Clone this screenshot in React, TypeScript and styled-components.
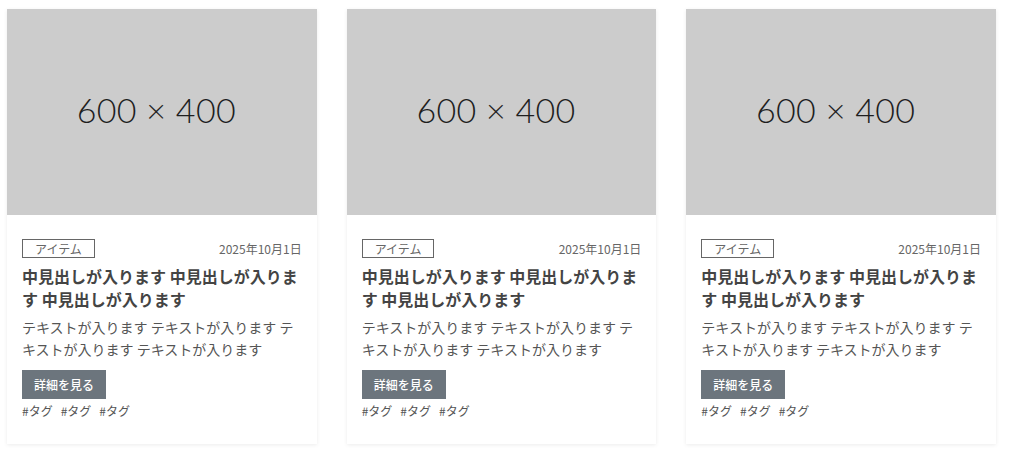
import styled, { createGlobalStyle } from "styled-components";

const GlobalStyle = createGlobalStyle`
  body {
    margin: 0;
    background: #fff;
    font-family: "Noto Sans CJK JP", "Noto Sans", sans-serif;
  }
`;

// Grid holding the three cards
const CardGrid = styled.div`
  display: grid;
  grid-template-columns: repeat(3, 1fr);
  gap: 30px;
  padding: 9px 13px 9px 7px;
`;

const Card = styled.article`
  background: #fff;
  box-shadow: 0 1px 4px rgba(0, 0, 0, 0.08);
  display: flex;
  flex-direction: column;
`;

// Grey placeholder image
const Thumb = styled.div`
  box-sizing: border-box;
  aspect-ratio: 3 / 2;
  background: #cccccc;
  display: flex;
  align-items: center;
  justify-content: center;
  padding: 0 11px 5px 0;
  color: #1e1e1e;
  font-family: "Lato", "Open Sans", sans-serif;
  font-weight: 300;
  font-size: 34px;
  letter-spacing: 0.3px;
`;

const Body = styled.div`
  padding: 24px 15px 24px;
  display: flex;
  flex-direction: column;
`;

const MetaRow = styled.div`
  display: flex;
  justify-content: space-between;
  align-items: center;
`;

const Category = styled.span`
  border: 1px solid #666;
  color: #666;
  font-size: 12px;
  line-height: 17px;
  padding: 0 12px;
`;

const Date = styled.time`
  color: #666;
  font-size: 12px;
`;

const Title = styled.h3`
  margin: 7px 0 0;
  color: #444;
  font-size: 16px;
  font-weight: 700;
  line-height: 23px;
`;

const Text = styled.p`
  margin: 5px 0 0;
  color: #555;
  font-size: 14px;
  line-height: 22px;
`;

const MoreButton = styled.a`
  align-self: flex-start;
  margin-top: 10px;
  background: #6c757d;
  color: #fff;
  font-size: 12px;
  font-weight: 500;
  line-height: 29px;
  padding: 0 12px;
  text-decoration: none;
`;

const Tags = styled.div`
  margin-top: 3px;
  display: flex;
  gap: 8px;
  color: #555;
  font-size: 12px;
  line-height: 18px;
`;

const items = [1, 2, 3];

const App = () => {
  return (
    <>
      <GlobalStyle />
      <CardGrid>
        {items.map((id) => (
          <Card key={id}>
            <Thumb>600 × 400</Thumb>
            <Body>
              <MetaRow>
                <Category>アイテム</Category>
                <Date>2025年10月1日</Date>
              </MetaRow>
              <Title>中見出しが入ります 中見出しが入ります 中見出しが入ります</Title>
              <Text>テキストが入ります テキストが入ります テキストが入ります テキストが入ります</Text>
              <MoreButton href="#">詳細を見る</MoreButton>
              <Tags>
                <span>#タグ</span>
                <span>#タグ</span>
                <span>#タグ</span>
              </Tags>
            </Body>
          </Card>
        ))}
      </CardGrid>
    </>
  );
};

export default App;
